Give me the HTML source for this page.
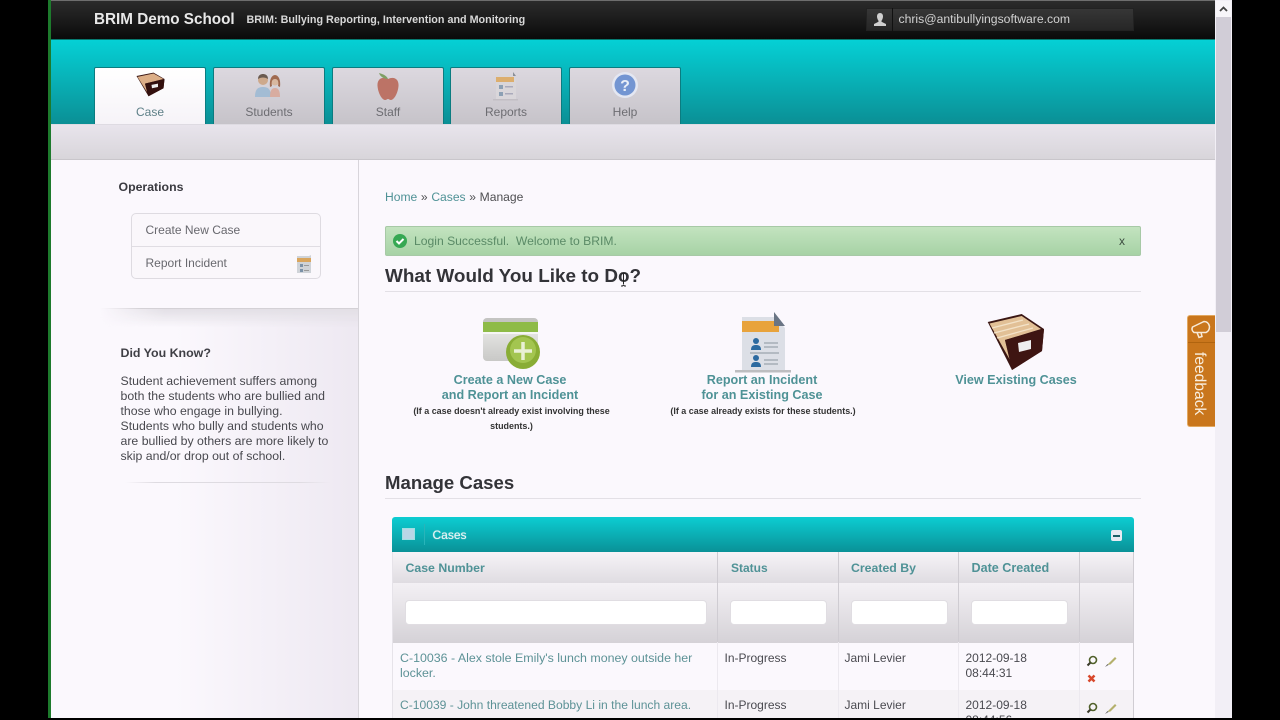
<!DOCTYPE html>
<html><head><meta charset="utf-8"><style>
html,body{margin:0;padding:0;background:#000;width:1280px;height:720px;overflow:hidden}
#p{position:relative;width:1280px;height:720px;overflow:hidden;font-family:"Liberation Sans",sans-serif;background:#000;filter:blur(.3px)}
.a{position:absolute}
.t{position:absolute;white-space:nowrap;font-size:12px;line-height:15px}
.tab{position:absolute;top:67px;width:112px;height:57px;box-sizing:border-box;background:linear-gradient(#dcd8df,#c6c3c9);border:1px solid #0b7c80;border-bottom:0;border-radius:2px 2px 0 0;text-align:center;color:#6d6d72;font-size:12px}
.tab span{position:absolute;left:0;right:0;top:37px;line-height:15px}
.tab svg{position:absolute;left:37px;top:3px}
.lnk{color:#4f9296}
.thl{position:absolute;top:561px;font:bold 12px/15px "Liberation Sans",sans-serif;color:#4f9296;white-space:nowrap}
.inp{position:absolute;top:600px;height:25px;box-sizing:border-box;background:#fff;border:1px solid #e0dde2;border-radius:4px}
.vl{position:absolute;top:642px;height:76px;width:1px;background:#ece9ef}
.act{position:absolute;text-align:center;color:#4f9296;font:bold 12.6px/15px "Liberation Sans",sans-serif;white-space:nowrap}
.sm{position:absolute;text-align:center;color:#333;font:bold 8.95px/15px "Liberation Sans",sans-serif;white-space:nowrap}
</style></head><body><div id="p">
<div class="a" style="left:48px;top:0;width:3px;height:718px;background:#1d7a2c"></div>
<div class="a" style="left:51px;top:0;width:1164px;height:718px;background:#fbf8fd"></div>

<div class="a" style="left:51px;top:0;width:1164px;height:39px;background:linear-gradient(#2c2c2c,#0a0a0a)"></div>
<div class="a" style="left:51px;top:0;width:1164px;height:1px;background:#6e6e6e"></div>
<div class="t" style="left:94px;top:10.500px;font-weight:bold;font-size:15.25px;line-height:17px;color:#e8e8e8">BRIM Demo School</div>
<div class="t" style="left:246.500px;top:12.500px;font-weight:bold;font-size:10.77px;color:#d8d8d8">BRIM: Bullying Reporting, Intervention and Monitoring</div>
<div class="a" style="left:866px;top:8px;width:268px;height:23px;background:linear-gradient(#363636,#262626);border:1px solid #222;box-sizing:border-box"></div>
<div class="a" style="left:892px;top:8px;width:1px;height:23px;background:#111"></div>
<svg class="a" style="left:872px;top:12px" width="16" height="15" viewBox="0 0 16 15"><path d="M8 1c2 0 3 1.500 3 3.500S10 8 9.500 8.800v1L14 12v2H2v-2l4.500-2.200v-1C6 8 5 6.500 5 4.500S6 1 8 1z" fill="#cfcfcf"/></svg>
<div class="t" style="left:898.500px;top:12px;color:#d2d2d2;font-size:12.200px">chris@antibullyingsoftware.com</div>

<div class="a" style="left:51px;top:39px;width:1164px;height:85px;background:linear-gradient(#05d0d5,#0b8f95);border-top:1px solid #067a70;box-sizing:border-box"></div>
<div class="a" style="left:51px;top:124px;width:1164px;height:36px;background:linear-gradient(#e8e4ec,#d8d5da);border-bottom:1px solid #c9c6cb;border-top:1px solid #dedbe2;box-sizing:border-box"></div>

<div class="tab" style="left:94px;background:linear-gradient(#fff,#f6f3f8);color:#5f8088"><svg width="36" height="32" viewBox="-4 0 72 76" preserveAspectRatio="none"><path d="M5 12L39 4 61 19 59 41 29 60z" fill="#3a1613"/><path d="M7 14L39 6 59 19 22 30 26 50z" fill="#dcae87"/><path d="M22 30L61 19 59 41 29 60z" fill="#33100e"/><path d="M35 33l13-3v8l-12 3z" fill="#eee"/></svg><span>Case</span></div>
<div class="tab" style="left:213px"><svg width="36" height="32" viewBox="0 0 36 32"><circle cx="12" cy="9" r="5" fill="#cda98c"/><path d="M7 8c0-4 3-5 5-5s5 1 5 5c-3-2-7-2-10 0z" fill="#6a5a50"/><path d="M4 26c0-8 3-10 8-10s8 2 8 10z" fill="#a3bcd4"/><circle cx="24" cy="10" r="4.500" fill="#d8b8a0"/><path d="M19 16c-1-8 2-12 5-12s6 4 5 12l-2-1c1-4 0-7-3-7s-4 3-3 7z" fill="#a06a50"/><path d="M19 26c0-7 2-9 5-9s5 2 5 9z" fill="#d8aca0"/></svg><span>Students</span></div>
<div class="tab" style="left:332px"><svg width="36" height="32" viewBox="0 0 36 32"><path d="M18 8C12 5 7 8 7.500 15 8 22 12 29 15 29c1.500 0 2-1 3-1s1.500 1 3 1c3 0 7-7 7.500-14C29 8 24 5 18 8z" fill="#bc7366"/><path d="M18 8C17 5 13 3 9 2c1 3 4 6 9 6z" fill="#7f9f65"/></svg><span>Staff</span></div>
<div class="tab" style="left:450px"><svg width="36" height="32" viewBox="0 0 36 32"><path d="M8 3h17l3 3v22H8z" fill="#d9d6da"/><rect x="8" y="6" width="18" height="5" fill="#dcae6e"/><path d="M25 1l3 4h-3z" fill="#8b8f98"/><rect x="11" y="14" width="4" height="4" fill="#8ca0b4"/><rect x="11" y="21" width="4" height="4" fill="#8ca0b4"/><rect x="17" y="15" width="8" height="1.500" fill="#aab"/><rect x="17" y="22" width="8" height="1.500" fill="#aab"/><rect x="5" y="28" width="25" height="1.500" fill="#c2bec4"/></svg><span>Reports</span></div>
<div class="tab" style="left:569px"><svg width="36" height="32" viewBox="0 0 36 32"><circle cx="18" cy="14" r="13" fill="#e4e7f2"/><circle cx="18" cy="14" r="10.500" fill="#7395d2"/><text x="18" y="20" text-anchor="middle" font-family="Liberation Sans" font-weight="bold" font-size="16" fill="#e8eef8">?</text></svg><span>Help</span></div>

<div class="a" style="left:51px;top:309px;width:307px;height:409px;background:linear-gradient(90deg,#fbf8fd 40%,#eee9f2 98%)"></div>
<div class="a" style="left:358px;top:160px;width:1px;height:558px;background:#d8d5db"></div>
<div class="a" style="left:100px;top:308px;width:258px;height:1px;background:linear-gradient(90deg,transparent,#d4d1d6 16%)"></div>
<div class="a" style="left:100px;top:309px;width:258px;height:18px;background:linear-gradient(#e2dfe5,rgba(236,232,240,0));-webkit-mask-image:linear-gradient(90deg,transparent,#000 25%)"></div>

<div class="t" style="left:118.500px;top:179.500px;font-weight:bold;font-size:12.300px;color:#3a3a40">Operations</div>
<div class="a" style="left:131px;top:213px;width:190px;height:66px;box-sizing:border-box;border:1px solid #dedbe1;border-radius:5px;background:#faf7fb"></div>
<div class="a" style="left:132px;top:246px;width:188px;height:1px;background:#e0dde3"></div>
<div class="t" style="left:145.500px;top:223px;color:#68686e">Create New Case</div>
<div class="t" style="left:145.500px;top:256px;color:#68686e">Report Incident</div>
<svg class="a" style="left:295px;top:253px" width="18" height="22" viewBox="0 0 18 22"><path d="M2 3h12l2-1v18H2z" fill="#cfd3d8"/><rect x="2" y="5" width="14" height="4" fill="#d9a55d"/><rect x="5" y="11" width="3" height="3" fill="#7c92a8"/><rect x="5" y="16" width="3" height="3" fill="#7c92a8"/><rect x="9" y="12" width="5" height="1" fill="#999"/><rect x="9" y="17" width="5" height="1" fill="#999"/></svg>

<div class="t" style="left:120.500px;top:346px;font-weight:bold;font-size:12.4px;color:#3f3f45">Did You Know?</div>
<div class="t" style="left:120.500px;top:373.500px;color:#48484e;line-height:15px;font-size:12.3px">Student achievement suffers among<br>both the students who are bullied and<br>those who engage in bullying.<br>Students who bully and students who<br>are bullied by others are more likely to<br>skip and/or drop out of school.</div>
<div class="a" style="left:125px;top:482px;width:205px;height:1px;background:linear-gradient(90deg,transparent,#dedbe1 15%,#dedbe1 85%,transparent)"></div>

<div class="t" style="left:385px;top:189.500px;color:#4f4f52;word-spacing:.3px;font-size:12.1px"><span class="lnk">Home</span> » <span class="lnk">Cases</span> » <span>Manage</span></div>

<div class="a" style="left:385px;top:226px;width:756px;height:30px;box-sizing:border-box;background:linear-gradient(#c3e3bf,#a6d2a5);border:1px solid #a7c9a6;border-radius:2px"></div>
<svg class="a" style="left:393px;top:234px" width="14" height="14" viewBox="0 0 14 14"><circle cx="7" cy="7" r="7" fill="#36a853"/><path d="M3.500 7l2.500 2.500 4.500-4.500" fill="none" stroke="#fff" stroke-width="2"/></svg>
<div class="t" style="left:414px;top:233.500px;color:#5a8a66;font-size:12.150px">Login Successful.&nbsp; Welcome to BRIM.</div>
<div class="t" style="left:1119px;top:234px;color:#3c4c40">x</div>

<div class="t" style="left:385px;top:266px;font-weight:bold;font-size:18.9px;line-height:22px;color:#333338">What Would You Like to Do?</div>
<div class="a" style="left:385px;top:291px;width:756px;height:1px;background:#e3e0e6"></div>
<svg class="a" style="left:619px;top:272px" width="9" height="16" viewBox="0 0 9 16"><path d="M2 1h1.500l1 1 1-1H7M4.500 2v10M2 14h1.500l1-1 1 1H7" fill="none" stroke="#222" stroke-width="1"/></svg>

<svg class="a" style="left:480px;top:315px" width="64" height="58" viewBox="0 0 64 58"><defs><linearGradient id="g1" x1="0" y1="0" x2="0" y2="1"><stop offset="0" stop-color="#f2f2f0"/><stop offset="1" stop-color="#c8c8c6"/></linearGradient></defs><rect x="3" y="3" width="55" height="43" rx="4" fill="url(#g1)"/><path d="M3 7a4 4 0 0 1 4-4h47a4 4 0 0 1 4 4z" fill="#c4c4c2"/><rect x="3" y="7" width="55" height="10" fill="#8ebb47"/><rect x="3" y="17" width="55" height="2" fill="#f6f6f4"/><circle cx="43" cy="37" r="17" fill="#89ad35"/><circle cx="43" cy="35" r="13" fill="#a3c550"/><path d="M43 27v18M34 36h18" stroke="#e9f0d6" stroke-width="3.500"/></svg>
<svg class="a" style="left:732px;top:311px" width="62" height="62" viewBox="0 0 62 62"><path d="M10 6h32l11 11v43H10z" fill="#dcdfe6"/><rect x="10" y="10" width="37" height="11" fill="#e8a33c"/><path d="M42 1l11 14H42z" fill="#6a7584"/><circle cx="24" cy="30" r="3" fill="#2c6aa0"/><path d="M19 39c0-4 2-5 5-5s5 1 5 5z" fill="#2c6aa0"/><circle cx="24" cy="47" r="3" fill="#2c6aa0"/><path d="M19 56c0-4 2-5 5-5s5 1 5 5z" fill="#2c6aa0"/><path d="M32 32h14M32 36h14M18 42h29M32 49h14M32 53h14" stroke="#9aa3ad" stroke-width="1.300"/><rect x="3" y="59" width="56" height="2.500" fill="#bdbdc0"/></svg>
<svg class="a" style="left:983px;top:310px" width="64" height="64" viewBox="0 0 64 64"><path d="M4.700 12L38.700 4 61 19 59 41 29 60z" fill="#3a1613"/><path d="M6.500 13.500L38.700 6 58 19 22 30 27 50z" fill="#e2c096"/><path d="M9 18L40 10M11 23L46 14M14 28L50 18" stroke="#f3e2c8" stroke-width="1.300"/><path d="M22 30L61 19 59 41 29 60z" fill="#3e1512"/><path d="M35 33l13-3v9l-12 3z" fill="#eee"/></svg>

<div class="act" style="left:390px;width:240px;top:373px">Create a New Case<br>and Report an Incident</div>
<div class="sm" style="left:390px;width:243px;top:404px">(If a case doesn't already exist involving these<br>students.)</div>
<div class="act" style="left:642px;width:240px;top:373px">Report an Incident<br>for an Existing Case</div>
<div class="sm" style="left:643px;width:240px;top:404px">(If a case already exists for these students.)</div>
<div class="act" style="left:896px;width:240px;top:373px">View Existing Cases</div>

<div class="t" style="left:385px;top:472px;font-weight:bold;font-size:18.6px;line-height:22px;color:#333338">Manage Cases</div>
<div class="a" style="left:385px;top:498px;width:756px;height:1px;background:#e3e0e6"></div>

<div class="a" style="left:392px;top:517px;width:742px;height:35px;box-sizing:border-box;background:linear-gradient(#0ccdd2,#0a9197);border-radius:3px 3px 0 0"></div>
<div class="a" style="left:402px;top:528px;width:13px;height:12px;background:#b9d6e6;border:1px solid #9fe0e2;box-sizing:border-box"></div>
<div class="a" style="left:424px;top:524px;width:1px;height:21px;background:#29b4b9"></div>
<div class="t" style="left:432.500px;top:528px;color:#e8f4f5;font-weight:normal;text-shadow:0 0 1px #cfeeee">Cases</div>
<div class="a" style="left:1110.500px;top:529.500px;width:11px;height:11px;background:#e8eaf2;border-radius:2px"></div>
<div class="a" style="left:1112.500px;top:534.500px;width:7px;height:2px;background:#1d5e66"></div>

<div class="a" style="left:392px;top:552px;width:742px;height:31px;background:linear-gradient(#f6f3f7,#dfdce1)"></div>
<div class="a" style="left:392px;top:583px;width:742px;height:59px;background:linear-gradient(#f3f0f4,#d5d2d7)"></div>
<div class="a" style="left:392px;top:642px;width:742px;height:1px;background:#d5d2d7"></div>
<div class="a" style="left:717px;top:552px;width:1px;height:90px;background:#cfccd2"></div>
<div class="a" style="left:838px;top:552px;width:1px;height:90px;background:#cfccd2"></div>
<div class="a" style="left:958px;top:552px;width:1px;height:90px;background:#cfccd2"></div>
<div class="a" style="left:1079px;top:552px;width:1px;height:90px;background:#cfccd2"></div>
<div class="a" style="left:1133px;top:552px;width:1px;height:166px;background:#d0cdd3"></div>
<div class="a" style="left:392px;top:552px;width:1px;height:166px;background:#e6e3e9"></div>

<div class="thl" style="left:405.500px;font-size:12.3px">Case Number</div>
<div class="thl" style="left:731px">Status</div>
<div class="thl" style="left:851px;font-size:12.3px">Created By</div>
<div class="thl" style="left:971.500px;font-size:12.6px">Date Created</div>
<div class="inp" style="left:405px;width:302px"></div>
<div class="inp" style="left:730px;width:97px"></div>
<div class="inp" style="left:851px;width:97px"></div>
<div class="inp" style="left:971px;width:97px"></div>

<div class="a" style="left:393px;top:690px;width:740px;height:28px;background:#f5f2f6"></div>
<div class="vl" style="left:717px"></div><div class="vl" style="left:838px"></div><div class="vl" style="left:958px"></div><div class="vl" style="left:1079px"></div>

<div class="t" style="left:400px;top:650.500px;color:#5d9296;font-size:12.4px">C-10036 - Alex stole Emily's lunch money outside her<br>locker.</div>
<div class="t" style="left:400px;top:697.500px;color:#5d9296;font-size:12.1px">C-10039 - John threatened Bobby Li in the lunch area.</div>
<div class="t" style="left:724.500px;top:650.500px;color:#4a4a50">In-Progress</div>
<div class="t" style="left:724.500px;top:697.500px;color:#4a4a50">In-Progress</div>
<div class="t" style="left:844.500px;top:650.500px;color:#4a4a50">Jami Levier</div>
<div class="t" style="left:844.500px;top:697.500px;color:#4a4a50">Jami Levier</div>
<div class="t" style="left:965.500px;top:650.500px;color:#4a4a50">2012-09-18<br>08:44:31</div>
<div class="a" style="left:960px;top:697.500px;width:100px;height:20.500px;overflow:hidden"><div class="t" style="left:5.500px;top:0;color:#4a4a50">2012-09-18<br>08:44:56</div></div>

<svg class="a" style="left:1085px;top:654px" width="34" height="30" viewBox="0 0 34 30"><circle cx="8" cy="6" r="3.500" fill="none" stroke="#50602a" stroke-width="1.600"/><path d="M5.500 8.500L2.500 11.500" stroke="#3a3a2a" stroke-width="2"/><path d="M22 11l2-2 6-6 1.500 1.500-6 6z" fill="#b4b06c"/><path d="M20 13l2.500-3 1 1z" fill="#666"/><path d="M3.500 21.500l6 6M9.500 21.500l-6 6" stroke="#d8482c" stroke-width="2.500"/></svg>
<svg class="a" style="left:1085px;top:701px" width="34" height="17" viewBox="0 0 34 17"><circle cx="8" cy="6" r="3.500" fill="none" stroke="#50602a" stroke-width="1.600"/><path d="M5.500 8.500L2.500 11.500" stroke="#3a3a2a" stroke-width="2"/><path d="M22 11l2-2 6-6 1.500 1.500-6 6z" fill="#b4b06c"/><path d="M20 13l2.500-3 1 1z" fill="#666"/></svg>

<div class="a" style="left:1187px;top:315px;width:28px;height:112px;background:#c9761c;border:1px solid #e2a860;box-sizing:border-box;border-right:0;border-radius:3px 0 0 3px"></div>
<div class="a" style="left:1188px;top:342px;width:27px;height:1px;background:#b0640f"></div>
<svg class="a" style="left:1189px;top:318px" width="24" height="22" viewBox="0 0 24 22"><path d="M3.500 9L15 3.500Q19.500 3.500 20.500 8.500Q20.500 13 17 14.500L5 14.500Q2 12 3.500 9zM8 14.500l2 5 3-1-1-4" fill="none" stroke="#f7ead8" stroke-width="1.500"/></svg>
<div class="a" style="left:1192px;top:352px;width:15px;height:66px"><div style="position:absolute;left:15px;top:0;transform-origin:0 0;transform:rotate(90deg);font:15.6px/15px 'Liberation Sans',sans-serif;color:#f9eede;white-space:nowrap">feedback</div></div>

<div class="a" style="left:1215px;top:0;width:17px;height:718px;background:#f2eff6"></div>
<div class="a" style="left:1216px;top:17px;width:15px;height:315px;background:#d1cdd7"></div>
<div class="a" style="left:1216px;top:1px;width:15px;height:16px;background:#f7f5f9"></div>
<svg class="a" style="left:1218px;top:5px" width="11" height="8" viewBox="0 0 11 8"><path d="M2 6l3.500-3.500L9 6" fill="none" stroke="#444" stroke-width="1.800"/></svg>
<div class="a" style="left:0;top:718px;width:1280px;height:2px;background:#000"></div>
</div></body></html>
